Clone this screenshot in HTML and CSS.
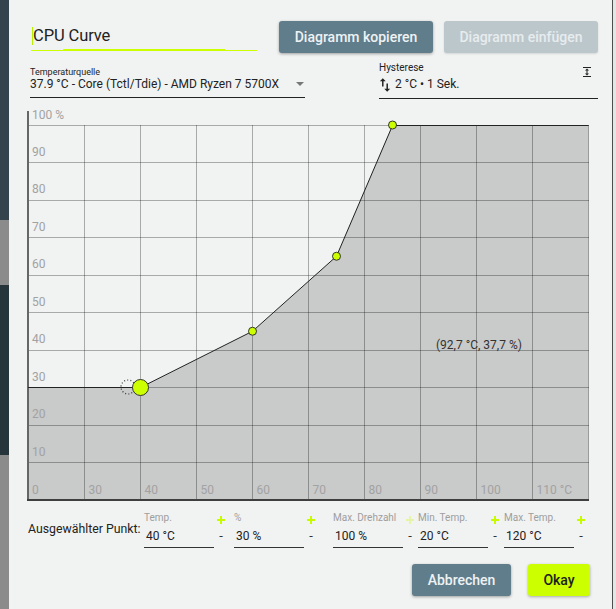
FILE: index.html
```html
<!DOCTYPE html>
<html lang="de">
<head>
<meta charset="utf-8">
<title>CPU Curve</title>
<link rel="stylesheet" href="styles.css">
</head>
<body>
<div class="screen">
  <div class="backdrop-left"></div>

  <section class="dialog">
    <header class="dialog-head">
      <div class="title-field"><span class="caret"></span>CPU Curve</div>
      <div class="head-actions">
        <button class="btn btn-slate btn-wide">Diagramm kopieren</button>
        <button class="btn btn-muted btn-wide" disabled>Diagramm einfügen</button>
      </div>
    </header>

    <div class="source-row">
      <div class="field field-source">
        <div class="field-label">Temperaturquelle</div>
        <div class="field-value">
          <span class="nowrap">37.9 °C - Core (Tctl/Tdie) - AMD Ryzen 7 5700X</span>
          <span class="select-arrow"></span>
        </div>
      </div>
      <div class="field field-hyst">
        <div class="field-label">
          <span>Hysterese</span>
          <svg class="hyst-expand" width="10" height="10" viewBox="3 2 18 20"><path d="M13,9V15H16L12,19L8,15H11V9H8L12,5L16,9H13M4,2H20V4H4V2M4,20H20V22H4V20Z"/></svg>
        </div>
        <div class="field-value field-value-hyst">
          <svg class="swap-icon" width="12" height="14" viewBox="4 2.5 16 19"><path d="M16 17.01V10h-2v7.01h-3L15 21l4-3.99h-3zM9 3L5 6.99h3V14h2V6.99h3L9 3z"/></svg>
          <span>2 °C • 1 Sek.</span>
        </div>
      </div>
    </div>

    <svg class="chart" width="564" height="394" viewBox="26 109 564 394">
      <polygon class="chart-area" points="28,387.5 140.5,387.5 252.5,331.25 336.5,256.25 392.5,125 588.5,125 588.5,500 28,500"/>
      <g class="chart-grid">
        <line x1="28" y1="125.5" x2="589" y2="125.5"/>
        <line x1="28" y1="162.5" x2="589" y2="162.5"/>
        <line x1="28" y1="200.5" x2="589" y2="200.5"/>
        <line x1="28" y1="237.5" x2="589" y2="237.5"/>
        <line x1="28" y1="275.5" x2="589" y2="275.5"/>
        <line x1="28" y1="312.5" x2="589" y2="312.5"/>
        <line x1="28" y1="350.5" x2="589" y2="350.5"/>
        <line x1="28" y1="387.5" x2="589" y2="387.5"/>
        <line x1="28" y1="425.5" x2="589" y2="425.5"/>
        <line x1="28" y1="462.5" x2="589" y2="462.5"/>
        <line x1="84.5" y1="125" x2="84.5" y2="500"/>
        <line x1="140.5" y1="125" x2="140.5" y2="500"/>
        <line x1="196.5" y1="125" x2="196.5" y2="500"/>
        <line x1="252.5" y1="125" x2="252.5" y2="500"/>
        <line x1="308.5" y1="125" x2="308.5" y2="500"/>
        <line x1="364.5" y1="125" x2="364.5" y2="500"/>
        <line x1="420.5" y1="125" x2="420.5" y2="500"/>
        <line x1="476.5" y1="125" x2="476.5" y2="500"/>
        <line x1="532.5" y1="125" x2="532.5" y2="500"/>
        <line x1="588.5" y1="125" x2="588.5" y2="500"/>
      </g>
      <line class="axis-y" x1="28" y1="111" x2="28" y2="501"/>
      <line class="axis-x" x1="27" y1="500" x2="589" y2="500"/>
      <g class="chart-labels">
        <text x="32" y="118.5">100 %</text>
        <text x="32" y="155.5">90</text>
        <text x="32" y="193">80</text>
        <text x="32" y="230.5">70</text>
        <text x="32" y="268">60</text>
        <text x="32" y="305.5">50</text>
        <text x="32" y="343">40</text>
        <text x="32" y="380.5">30</text>
        <text x="32" y="418">20</text>
        <text x="32" y="455.5">10</text>
        <text x="32" y="493.5">0</text>
        <text x="88.5" y="493.5">30</text>
        <text x="144.5" y="493.5">40</text>
        <text x="200.5" y="493.5">50</text>
        <text x="256.5" y="493.5">60</text>
        <text x="312.5" y="493.5">70</text>
        <text x="368.5" y="493.5">80</text>
        <text x="424.5" y="493.5">90</text>
        <text x="480.5" y="493.5">100</text>
        <text x="536.5" y="493.5">110 °C</text>
      </g>
      <polyline class="chart-curve" points="28,387.5 140.5,387.5 252.5,331.25 336.5,256.25 392.5,125.5 588.5,125.5"/>
      <circle class="pt-ghost" cx="128" cy="387" r="7"/>
      <circle class="pt" cx="252.5" cy="331.25" r="4"/>
      <circle class="pt" cx="336.5" cy="256.25" r="4"/>
      <circle class="pt" cx="392.5" cy="125" r="4"/>
      <circle class="pt" cx="140.5" cy="387.5" r="8"/>
      <text class="chart-readout" x="436" y="349">(92,7 °C, 37,7 %)</text>
    </svg>

    <div class="point-row">
      <div class="point-caption">Ausgewählter Punkt:</div>

      <div class="pfield">
        <span class="pfield-label">Temp.</span>
        <svg class="pm-plus" width="8" height="8" viewBox="0 0 8 8"><path d="M0 3h8v2H0zM3 0h2v8H3z"/></svg>
        <span class="pfield-value">40 °C</span>
        <span class="pm-minus">-</span>
      </div>

      <div class="pfield">
        <span class="pfield-label">%</span>
        <svg class="pm-plus" width="8" height="8" viewBox="0 0 8 8"><path d="M0 3h8v2H0zM3 0h2v8H3z"/></svg>
        <span class="pfield-value">30 %</span>
        <span class="pm-minus">-</span>
      </div>

      <div class="pfield">
        <span class="pfield-label">Max. Drehzahl</span>
        <svg class="pm-plus pm-off" width="8" height="8" viewBox="0 0 8 8"><path d="M0 3h8v2H0zM3 0h2v8H3z"/></svg>
        <span class="pfield-value">100 %</span>
        <span class="pm-minus">-</span>
      </div>

      <div class="pfield">
        <span class="pfield-label">Min. Temp.</span>
        <svg class="pm-plus" width="8" height="8" viewBox="0 0 8 8"><path d="M0 3h8v2H0zM3 0h2v8H3z"/></svg>
        <span class="pfield-value">20 °C</span>
        <span class="pm-minus">-</span>
      </div>

      <div class="pfield">
        <span class="pfield-label">Max. Temp.</span>
        <svg class="pm-plus" width="8" height="8" viewBox="0 0 8 8"><path d="M0 3h8v2H0zM3 0h2v8H3z"/></svg>
        <span class="pfield-value">120 °C</span>
        <span class="pm-minus">-</span>
      </div>
    </div>

    <footer class="dialog-foot">
      <button class="btn btn-slate btn-cancel">Abbrechen</button>
      <button class="btn btn-lime btn-okay">Okay</button>
    </footer>
  </section>

  <div class="backdrop-right"></div>
</div>
</body>
</html>
```

FILE: styles.css
```css
html,
body {
  margin: 0;
  height: 609px;
  overflow: hidden;
}

body {
  font-family: Roboto, "Liberation Sans", Arial, sans-serif;
  color: #222;
  background: #e4e6e6;
}

.screen {
  display: flex;
  width: 616px;
  height: 609px;
}

.nowrap {
  white-space: nowrap;
}

/* app window peeking out behind the dialog */
.backdrop-left {
  flex: none;
  width: 9px;
  background: linear-gradient(to bottom,
    #33444c 0, #33444c 220px,
    #8b8b8b 220px, #8b8b8b 285px,
    #26353c 285px, #26353c 455px,
    #8b8b8b 455px);
}

.backdrop-right {
  flex: 1;
  border-left: 1px solid #4d4d4d;
  background: #e4e6e6;
}

.dialog {
  flex: none;
  width: 603px;
  box-sizing: border-box;
  padding: 21px 14px 0 19px;
  background: #f1f2f2;
  display: flex;
  flex-direction: column;
}

/* ---------- header ---------- */
.dialog-head {
  display: flex;
  align-items: flex-start;
}

.title-field {
  position: relative;
  display: flex;
  align-items: center;
  width: 226px;
  margin: 4px 0 0 3px;
  padding-bottom: 3px;
  border-bottom: 1px solid #ccff00;
  font-size: 16.5px;
  line-height: 22px;
  letter-spacing: -0.1px;
  color: #222;
}

.title-field::after {
  content: "";
  position: absolute;
  left: 32px;
  right: 32px;
  bottom: -1px;
  height: 2px;
  background: #ccff00;
}

.caret {
  width: 1px;
  height: 18px;
  margin: 0 0 0 1px;
  background: #b8f000;
}

.head-actions {
  margin-left: auto;
  display: flex;
  gap: 11px;
}

.btn {
  height: 32px;
  padding: 0;
  border: 0;
  border-radius: 3px;
  font-family: Roboto, "Liberation Sans", Arial, sans-serif;
  font-size: 14px;
  font-weight: 500;
  cursor: pointer;
}

.btn-wide {
  width: 154px;
}

.btn-slate {
  background: #607d8b;
  color: #eef2f4;
  box-shadow: 0 1px 3px rgba(0, 0, 0, 0.35);
}

.btn-muted {
  background: #bcc7cc;
  color: #e7ecee;
  box-shadow: 0 1px 2px rgba(0, 0, 0, 0.12);
}

.btn-lime {
  background: #ccff00;
  color: #1d1d1d;
  box-shadow: 0 1px 3px rgba(0, 0, 0, 0.3);
}

/* ---------- source / hysteresis ---------- */
.source-row {
  display: flex;
  align-items: flex-start;
  margin-top: 13px;
}

.field-label {
  display: flex;
  justify-content: space-between;
  height: 10px;
  font-size: 10px;
  line-height: 10px;
  color: #222;
}

.field-value {
  display: flex;
  align-items: center;
  justify-content: space-between;
  padding-bottom: 5px;
  border-bottom: 1px solid #222;
  font-size: 12px;
  line-height: 16px;
}

.field-source {
  width: 275px;
  margin-left: 2px;
}

.field-source .field-label {
  font-size: 9px;
  line-height: 12px;
}

.select-arrow {
  width: 0;
  height: 0;
  margin-right: 1px;
  border-left: 4px solid transparent;
  border-right: 4px solid transparent;
  border-top: 4px solid #777;
}

.field-hyst {
  width: 219px;
  margin-left: auto;
  margin-top: -3px;
}

.hyst-expand {
  margin: 4px 6px 0 0;
  fill: #222;
}

.field-value-hyst {
  justify-content: flex-start;
  margin-top: 3px;
  padding-bottom: 6px;
}

.swap-icon {
  margin: 1px 4px 0 0;
  fill: #222;
}

/* ---------- chart ---------- */
.chart {
  display: block;
  margin: 10px 0 0 -2px;
  font-family: Roboto, "Liberation Sans", Arial, sans-serif;
}

.chart-area {
  fill: #c9caca;
}

.chart-grid line {
  stroke: #000;
  stroke-opacity: 0.3;
  stroke-width: 1;
}

.axis-y {
  stroke: #666;
  stroke-width: 2;
}

.axis-x {
  stroke: #3f3f3f;
  stroke-width: 2;
}

.chart-labels text {
  font-size: 12px;
  fill: #a2a2a2;
}

.chart-curve {
  fill: none;
  stroke: #222;
  stroke-width: 1;
}

.pt {
  fill: #ccff00;
  stroke: #333;
  stroke-width: 1;
}

.pt-ghost {
  fill: none;
  stroke: #333;
  stroke-width: 1.2;
  stroke-dasharray: 1 2.2;
}

.chart-readout {
  font-size: 12px;
  fill: #333;
}

/* ---------- selected point ---------- */
.point-row {
  display: grid;
  grid-template-columns: 116px 90px 99px 85px 86px 85px;
  margin-top: 9px;
}

.point-caption {
  padding-top: 9px;
  font-size: 12.3px;
  line-height: 16px;
  white-space: nowrap;
}

.pfield {
  display: grid;
  grid-template-columns: 70px 14px;
  grid-template-rows: 12px auto;
}

.pfield-label {
  font-size: 10px;
  line-height: 12px;
  color: #9e9e9e;
  white-space: nowrap;
}

.pm-plus {
  justify-self: center;
  align-self: end;
  margin-bottom: 0;
  fill: #c8fa00;
}

.pm-off {
  fill: #e4f5a8;
}

.pfield-value {
  padding: 4px 0 3px 2px;
  border-bottom: 1px solid #333;
  font-size: 12px;
  line-height: 16px;
}

.pm-minus {
  padding-top: 4px;
  text-align: center;
  font-size: 13px;
  line-height: 16px;
  color: #333;
}

/* ---------- footer ---------- */
.dialog-foot {
  display: flex;
  justify-content: flex-end;
  gap: 17px;
  margin: 16px 8px 0 0;
}

.btn-cancel {
  width: 99px;
}

.btn-okay {
  width: 62px;
}
```
